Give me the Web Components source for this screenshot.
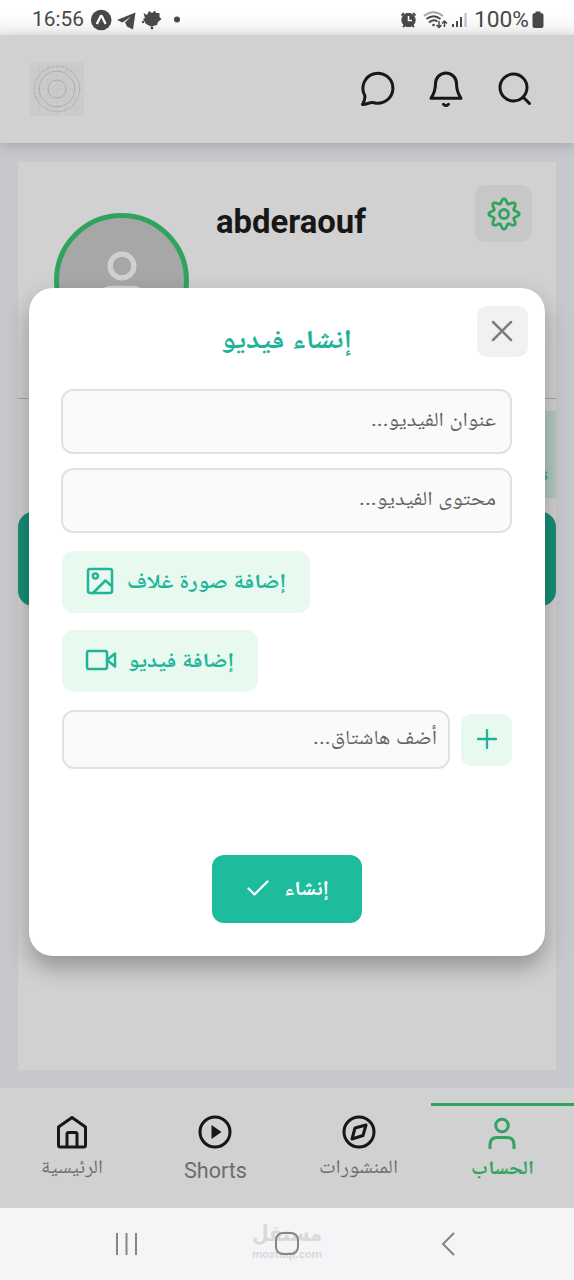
<!DOCTYPE html>
<html lang="ar">
<head>
<meta charset="utf-8">
<title>إنشاء فيديو</title>
<style>
html,body{margin:0;height:100%}
body{width:574px;height:1280px;overflow:hidden;font-family:Roboto,"Noto Naskh Arabic","Noto Sans Arabic","DejaVu Sans",sans-serif;background:#c7c8cc}
</style>
</head>
<body>
<app-screen></app-screen>
<script>
const define=(name,html,setup)=>customElements.define(name,class extends HTMLElement{
  connectedCallback(){
    if(this.shadowRoot)return;
    const root=this.attachShadow({mode:'open'});
    const t=document.createElement('template');
    t.innerHTML=html;
    root.append(t.content.cloneNode(true));
    if(setup)setup(this,root);
  }
});

/* Single-line label that scales its text to the "fit" width. */
define('fit-label',`<style>
:host{display:block;white-space:nowrap;flex:none;direction:ltr}
span{display:inline-block;transform-origin:0 50%}
</style><span><slot></slot></span>`,(el,root)=>{
  const s=root.querySelector('span'),w=+el.getAttribute('fit');
  if(/[\u0600-\u06ff]/.test(el.textContent))s.style.direction='rtl';
  el.style.width=w+'px';
  const n=s.getBoundingClientRect().width;
  if(n)s.style.transform='scaleX('+w/n+')';
});

/* Eight-tooth cog outline with softly rounded teeth. */
const cog=Array.from({length:96},(_,i)=>{
  const a=i*Math.PI/48,r=12.9+2.3*Math.cos(8*a);
  return (17+r*Math.sin(a)).toFixed(2)+' '+(17-r*Math.cos(a)).toFixed(2);
}).join('L');

const icons={
chat:['0 0 36 36','<path d="M3.5 33.5C5 31 6.4 28.5 5.8 24.5A15 15 0 1 1 15 31.7C10.5 30.8 8 33.6 3.5 33.5Z"/>'],
bell:['0 0 36 36','<path d="M3 27.3H33C29.500 22 28.500 18 28.500 12.5A10.500 10.500 0 0 0 7.500 12.5C7.500 18 6.500 22 3 27.3ZM15.5 33.3Q18 36 20.5 33.3"/>'],
search:['0 0 36 36','<circle cx="16.5" cy="16.5" r="13.5"/><path d="M26.5 26.5L32.500 32.500"/>'],
gear:['0 0 34 34','<circle cx="17" cy="17" r="4.500"/><path d="M'+cog+'Z"/>'],
close:['0 0 24 24','<path d="M3 3L21 21M21 3L3 21"/>'],
image:['0 0 28 28','<rect x="2" y="2" width="24" height="24" rx="2"/><circle cx="9.4" cy="9" r="2.5"/><path d="M7 26L19.5 13.5L26 19.5"/>'],
video:['0 0 32 22','<rect x="2" y="2" width="20" height="18" rx="2"/><path d="M22 11L30 4.5V17.5Z"/>'],
plus:['0 0 20 20','<path d="M10 1V19M1 10H19"/>'],
check:['0 0 22 18','<path d="M1.5 9.5L7.5 15.5L20.5 2.5"/>'],
home:['0 0 34 34','<path d="M3.5 12L17 2.500L30.500 12V30Q30.500 32 28.500 32H5.500Q3.500 32 3.500 30ZM12 32V19Q12 17.500 13.500 17.500H20.500Q22 17.500 22 19V32"/>'],
play:['0 0 34 34','<circle cx="17" cy="17" r="15"/><path d="M13.500 10L23.500 17L13.500 24Z" fill="currentColor" stroke="none"/>'],
compass:['0 0 34 34','<circle cx="17" cy="17" r="15"/><path d="M24 10L21 20.500L10 24L13 13Z"/>'],
user:['0 0 34 34','<circle cx="17" cy="9.500" r="6.300"/><path stroke-linecap="butt" d="M5 33V29Q5 21.500 12 21.500H22Q29 21.500 29 29V33"/>']
};
define('ui-icon',`<style>
:host{display:block;flex:none}
svg{display:block;width:100%;height:100%;fill:none;stroke:currentColor;stroke-linecap:round;stroke-linejoin:round}
</style><svg></svg>`,(el,root)=>{
  const [box,body]=icons[el.getAttribute('name')],svg=root.querySelector('svg'),b=box.split(' ');
  svg.setAttribute('viewBox',box);svg.innerHTML=body;
  svg.style.strokeWidth=el.getAttribute('stroke')||2.8;
  const w=+(el.getAttribute('size')||b[2]);
  el.style.width=w+'px';el.style.height=w*b[3]/b[2]+'px';
});

define('status-bar',`<style>
:host{display:flex;height:35px;box-sizing:border-box;padding:0 30px 0 32px;align-items:center;justify-content:space-between;background:linear-gradient(#fff 0,#fff 14px,#f0f0f0 35px);color:#484848;font-size:21px;line-height:35px}
div{display:flex;align-items:center;height:35px;padding-top:4px}
svg{display:block}
fit-label{line-height:35px}
.level{font-size:22.500px;margin:0 3px 0 6px}
</style>
<div>
<fit-label fit="52">16:56</fit-label>
<svg style="margin-left:6px" width="94" height="24" viewBox="0 0 94 24">
<circle cx="11.200" cy="12" r="10.300" fill="#484848"/><path d="M6.800 16L10.500 8.500Q11.300 7.300 12 8.500L15.600 16" fill="none" stroke="#fff" stroke-width="2.300"/>
<path d="M27 12L45.500 4.500L43 21.500L37 18.500L35 14.500L41 8.500L32.500 14.500Z" fill="#484848"/>
<path d="M53.500 5L57 7L59 3L62 5L65 2.500L66 5L69.500 5V9L71.500 11L68 14L67 17L61 18.500L56 16L53 11L55 10Z" fill="#484848"/><circle cx="53" cy="14" r="1.200" fill="#484848"/><circle cx="62" cy="20" r="1.400" fill="#484848"/>
<circle cx="87" cy="11.600" r="3" fill="#484848"/></svg>
</div>
<div>
<svg width="70" height="24" viewBox="0 0 70 24" fill="none" stroke="#484848">
<circle cx="10.500" cy="12" r="6.700" fill="#484848"/><path d="M3.500 7.500L6 5M15 5L17.500 7.500M5 19L7 17M16 19L14 17" stroke-width="1.800"/><path d="M10.500 8V12.500H14" stroke="#fff" stroke-width="1.500"/>
<path d="M26 8Q35.500 .5 45 8" stroke="#aaa" stroke-width="2"/><path d="M28.500 11Q35.500 5.500 42.500 11M31 14.500Q35 10.500 39.500 13.500" stroke-width="2"/><circle cx="35.500" cy="17" r="1.300" fill="#484848" stroke="none"/><path d="M41 13V19M38.500 17L41 19.500L43.500 17M46.500 19V13M44 15.500L46.500 13L49 15.500" stroke-width="1.500"/>
<path d="M55 16V19M59 13V19M63 9V19" stroke-width="2"/><path d="M67.500 5V19" stroke="#bbb" stroke-width="2"/></svg>
<fit-label fit="55" class="level">100%</fit-label>
<svg width="12" height="18" viewBox="0 0 12 18"><path d="M3.500 2V.5H8.500V2Q11.500 2 11.500 4V15Q11.500 17 9.500 17H2.500Q.5 17 .5 15V4Q.5 2 3.500 2Z" fill="#484848"/></svg>
</div>`);

define('app-header',`<style>
:host{display:flex;height:108px;box-sizing:border-box;padding:0 41px 0 30px;align-items:center;gap:33px;background:#d1d1d1;color:#171717;box-shadow:0 2px 12px rgba(0,0,0,.18);position:relative}
.logo{margin-right:auto;display:block}
</style>
<svg class="logo" width="54" height="54" viewBox="0 0 54 54" fill="none"><rect width="54" height="54" fill="#cbcbcb"/><path d="M9 0V54M18 0V54M27 0V54M36 0V54M45 0V54M0 9H54M0 18H54M0 27H54M0 36H54M0 45H54" stroke="#c2c2c2" stroke-width=".6"/><g stroke="#aaa" stroke-width=".9"><circle cx="27" cy="27" r="22.700" stroke-dasharray="4 1"/><circle cx="27" cy="27" r="17.700"/><circle cx="27" cy="27" r="9"/></g></svg>
<ui-icon name="chat" stroke="3"></ui-icon><ui-icon name="bell" stroke="3"></ui-icon><ui-icon name="search" stroke="3"></ui-icon>`);

define('profile-page',`<style>
:host{display:block;height:945px;box-sizing:border-box;padding:19px 18px 18px;background:#c7c8cc}
.card{height:908px;background:#d1d1d1}
.top{display:flex;height:237px;box-sizing:border-box;padding:23px 24px 0 36px;border-bottom:1px solid #a8a8a8}
.avatar{width:135px;height:135px;box-sizing:border-box;border:5px solid #30a45f;border-radius:50%;background:#a7a7a7;margin-top:28px;display:flex;justify-content:center;padding-top:30px;color:#d1d1d1}
.name{margin:13px auto 0 27px;font:bold 34px/46px Roboto;color:#171717}
.gear{width:57px;height:57px;border-radius:11px;background:#c7c7c7;display:grid;place-items:center;color:#30a45f}
.tabs{display:flex;justify-content:flex-end;padding:12px 0 14px}
.tab{width:174px;height:87px;background:#b2cabd;color:#30a082;font-size:17px;line-height:127px;box-sizing:border-box;padding-right:8px;text-align:right}
.banner{height:94px;border-radius:15px;background:#178f76}
</style>
<div class="card"><div class="top"><div class="avatar"><ui-icon name="user" size="64" stroke="2.800"></ui-icon></div>
<fit-label class="name" fit="150">abderaouf</fit-label><div class="gear"><ui-icon name="gear" stroke="2.800"></ui-icon></div></div>
<div class="tabs"><div class="tab">s</div></div><div class="banner"></div></div>`);

define('bottom-nav',`<style>
:host{display:flex;height:120px;background:#d1d1d1}
.item{display:flex;flex:1;flex-direction:column;align-items:center;box-sizing:border-box;padding-top:27px;color:#171717}
fit-label{color:#6d6d6d;font-size:19px;line-height:30px;margin-top:3px}
.latin fit-label{font-size:22px;margin-top:7px}
.active{color:#30a45f;border-top:3px solid #30a45f;margin-top:15px;padding-top:10px}
.active fit-label{color:#30a45f;font-weight:bold;margin-top:3px}
</style>
<div class="item"><ui-icon name="home" stroke="3"></ui-icon><fit-label fit="62">الرئيسية</fit-label></div>
<div class="item latin"><ui-icon name="play" stroke="3"></ui-icon><fit-label fit="63">Shorts</fit-label></div>
<div class="item"><ui-icon name="compass" stroke="3"></ui-icon><fit-label fit="79">المنشورات</fit-label></div>
<div class="item active"><ui-icon name="user" stroke="3"></ui-icon><fit-label fit="63">الحساب</fit-label></div>`);

define('system-nav',`<style>
:host{display:grid;grid-template-columns:252px 70px 252px;height:72px;background:#f5f5f7;align-items:center}
:host>svg{display:block;justify-self:center}
.mark{height:36px;position:relative;color:#d9d9dc;font-weight:bold}
.mark .a{font-family:"DejaVu Sans",sans-serif;font-size:22px;line-height:21px;margin-top:-3px}
.mark .b{font-size:10.500px;line-height:12px;margin-top:5px}
.mark svg{position:absolute;left:22px;top:5px}
</style>
<svg width="24" height="24" viewBox="0 0 24 24" stroke="#858585" stroke-width="2"><path d="M3 1V23M12.500 1V23M22 1V23"/></svg>
<div class="mark"><fit-label class="a" fit="70">مستقل</fit-label><fit-label class="b" fit="70">mostaql.com</fit-label>
<svg width="26" height="26" viewBox="0 0 26 26" fill="none" stroke="#858585" stroke-width="2"><rect x="2" y="2" width="22" height="21" rx="7"/></svg></div>
<svg width="16" height="26" viewBox="0 0 16 26" fill="none" stroke="#858585" stroke-width="2"><path d="M14 2L3 13L14 24"/></svg>`);

define('text-field',`<style>
:host{display:flex;box-sizing:border-box;height:65px;border:2px solid #dfe2e2;border-radius:12px;background:#fafafa;color:#626262;font-size:20px;justify-content:flex-end;padding:0 14px;line-height:57px}
</style><slot></slot>`);
define('pick-button',`<style>
:host{display:flex;box-sizing:border-box;height:62px;align-items:center;border-radius:12px;background:#e8f9f0;color:#21b597;font-weight:bold;font-size:20px;line-height:54px;padding-bottom:2px}
</style><slot></slot>`);
define('create-dialog',`<style>
:host{display:flex;flex-direction:column;box-sizing:border-box;width:516px;height:668px;border-radius:24px;background:#fff;box-shadow:0 11px 23px rgba(0,0,0,.3);padding:18px 33px 33px 32px}
header{display:grid;grid-template-columns:1fr 131px 1fr;height:83px;margin-right:-16px;margin-left:-17px}
.title{grid-column:2;color:#20b398;font-size:26px;font-weight:bold;line-height:66px}
.close{justify-self:end;width:51px;height:51px;box-sizing:border-box;padding:0 2px 2px 0;border-radius:10px;background:#f1f1f1;color:#7e7e7e;display:grid;place-items:center}
.second{margin-top:14px}
.cover{width:248px;margin:18px 0 0 1px;padding-left:24px;gap:13px}
.video{width:196px;margin:17px 0 0 1px;padding-left:23px;gap:11px}
.tags{display:flex;gap:11px;align-items:center;margin:18px 0 0 1px}
.tags text-field{flex:1;height:59px;padding:0 11px;line-height:51px}
.plus{width:51px;height:52px;box-sizing:border-box;padding-bottom:2px;border-radius:10px;background:#e8f9f0;color:#20b398;display:grid;place-items:center}
.submit{display:flex;width:150px;height:68px;box-sizing:border-box;margin:86px auto 0 151px;border-radius:12px;background:#1dbc9c;color:#fff;align-items:center;padding:0 0 2px 35px;gap:15px;font-size:20px;font-weight:bold;line-height:62px}
</style>
<header><fit-label class="title" fit="131">إنشاء فيديو</fit-label><div class="close"><ui-icon name="close" stroke="2.500"></ui-icon></div></header>
<text-field><fit-label fit="125">عنوان الفيديو...</fit-label></text-field>
<text-field class="second"><fit-label fit="137">محتوى الفيديو...</fit-label></text-field>
<pick-button class="cover"><ui-icon name="image" stroke="2.500"></ui-icon><fit-label fit="159">إضافة صورة غلاف</fit-label></pick-button>
<pick-button class="video"><ui-icon name="video" stroke="2.500"></ui-icon><fit-label fit="106">إضافة فيديو</fit-label></pick-button>
<div class="tags"><text-field><fit-label fit="124">أضف هاشتاق...</fit-label></text-field><div class="plus"><ui-icon name="plus" stroke="2.300"></ui-icon></div></div>
<div class="submit"><ui-icon name="check" stroke="2.300"></ui-icon><fit-label fit="45">إنشاء</fit-label></div>`);

define('app-screen',`<style>
:host{display:flex;flex-direction:column;width:574px;height:1280px;position:relative}
create-dialog{position:absolute;left:29px;top:288px}
</style><status-bar></status-bar><app-header></app-header><profile-page></profile-page><bottom-nav></bottom-nav><system-nav></system-nav><create-dialog></create-dialog>`);
</script>
</body>
</html>
